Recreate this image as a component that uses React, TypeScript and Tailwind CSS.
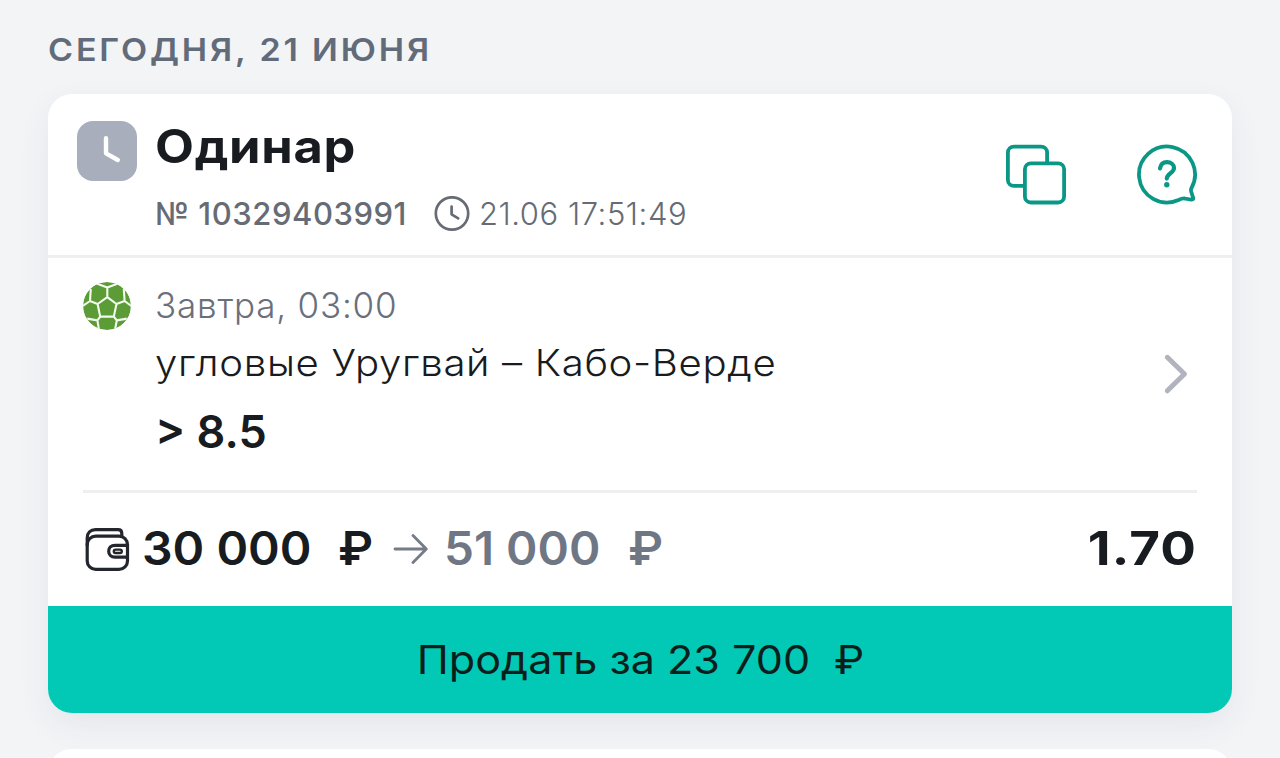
function StatusIcon() {
  return (
    <div className="h-[60px] w-[60px] shrink-0 rounded-[16px] bg-[#a9aebc]">
      <svg viewBox="0 0 60 60" className="h-full w-full" fill="none" stroke="#fff" strokeWidth="4.4" strokeLinecap="round" strokeLinejoin="round">
        <path d="M29 17.2V32.3L40.8 39" />
      </svg>
    </div>
  );
}

function ClockIcon() {
  return (
    <svg viewBox="0 0 36 36" className="h-9 w-9 shrink-0" fill="none" stroke="#666b74" strokeWidth="2.7" strokeLinecap="round" strokeLinejoin="round">
      <circle cx="18" cy="17.5" r="16.2" />
      <path d="M17.6 10.5V18.3L24.2 22.3" />
    </svg>
  );
}

function CopyIcon() {
  return (
    <svg viewBox="0 0 64 64" className="h-16 w-16" fill="none" stroke="#0b9786" strokeWidth="3.8">
      <rect x="3.9" y="4.7" width="39.2" height="39.2" rx="6" />
      <rect x="20.9" y="21.3" width="39.2" height="39.2" rx="6" fill="#fff" />
    </svg>
  );
}

function HelpIcon() {
  return (
    <svg viewBox="0 0 64 64" className="h-16 w-16" fill="none" stroke="#0b9786" strokeWidth="3.8" strokeLinecap="round" strokeLinejoin="round">
      <path d="M56.4 46.2A28 28 0 1 0 43.5 58C46 56.8 47.3 56.2 49.6 56.5L56 57.6C57.6 57.9 58.6 57.2 58.2 55.8L56.3 50C55.9 48.6 55.8 47.4 56.4 46.2Z" />
      <path d="M25 26.4C25.7 22.2 28.4 20.2 32 20.2C36 20.2 39 22.7 39 26C39 31.3 31.8 31.3 31.8 36.6" strokeWidth="4.2" />
      <circle cx="31.8" cy="42.8" r="2.7" fill="#0b9786" stroke="none" />
    </svg>
  );
}

function BallIcon() {
  return (
    <svg viewBox="0 0 48 48" className="mt-[0.5px] h-12 w-12 shrink-0">
      <defs>
        <clipPath id="ball">
          <circle cx="24" cy="24" r="24" />
        </clipPath>
      </defs>
      <g clipPath="url(#ball)">
        <circle cx="24" cy="24" r="24" fill="#5b9c37" />
        <path
          d="M24.3 15.2L33.5 22L30.8 34.6H17.2L14.6 22ZM24.3 15.2V5.6M24.3 5.6L13 1.2M24.3 5.6L35.6 1.2M33.5 22L41.6 19M14.6 22L7 19M41.6 19L40.8 7M41.6 19L49 24.5M7 19L7.8 7M7 19L-1 24.5M30.8 34.6L33.8 38.4M17.2 34.6L14.4 38.4M33.8 38.4L43.8 36.6M33.8 38.4L32 48M14.4 38.4L4.2 36.6M14.4 38.4L16 48"
          fill="none"
          stroke="#f4fbef"
          strokeWidth="2.1"
          strokeLinejoin="round"
        />
      </g>
    </svg>
  );
}

function WalletIcon() {
  return (
    <svg viewBox="0 0 48 48" className="mt-[4px] ml-px h-12 w-12 shrink-0" fill="none" stroke="#23262c" strokeWidth="3.2" strokeLinecap="round" strokeLinejoin="round">
      <rect x="3.2" y="10.2" width="40.3" height="33.2" rx="8.5" />
      <path d="M3.2 19V12C3.2 7 6.5 3.7 11.5 3.7H34C36.8 3.7 37.8 5.2 37.8 7.5V10.2" />
      <path d="M43.5 19.4H31C27 19.4 24.7 21.8 24.7 25.2C24.7 28.6 27 31.2 31 31.2H43.5" />
      <rect x="29.8" y="23.6" width="8" height="3.4" rx="1.7" strokeWidth="2.4" />
    </svg>
  );
}

export default function App() {
  return (
    <div className="h-[758px] overflow-hidden bg-[#f3f4f6] px-12 font-['Inter',sans-serif] text-[#181b20]">
      <h1 className="h-[94px] origin-left scale-x-[1.097] pt-7 text-[31px] leading-[44px] font-semibold tracking-[2.6px] whitespace-nowrap text-[#626b79]">
        СЕГОДНЯ, 21 ИЮНЯ
      </h1>

      <section className="overflow-hidden rounded-[24px] bg-white shadow-[0_12px_32px_rgba(50,55,100,0.07)]">
        <header className="flex h-[164px] border-b-[3px] border-[#eeeff1] pr-[33px] pl-[29px]">
          <div className="pt-[27px]">
            <StatusIcon />
          </div>
          <div className="ml-[18px] flex-1 pt-[24px]">
            <h2 className="origin-left scale-x-[1.1] text-[46px] leading-[56px] font-bold tracking-[0.6px]">Одинар</h2>
            <div className="mt-[22px] flex h-9 items-center text-[31px] leading-9 whitespace-nowrap text-[#666b74]">
              <span className="w-[279px] font-medium tracking-[0.55px]">№ 10329403991</span>
              <ClockIcon />
              <span className="ml-[9px] font-light tracking-[0.55px]">21.06 17:51:49</span>
            </div>
          </div>
          <div className="flex gap-[67px] pt-12">
            <CopyIcon />
            <HelpIcon />
          </div>
        </header>

        <div className="flex h-[232px] pt-[23px] pl-[35px]">
          <BallIcon />
          <div className="ml-6 flex-1 whitespace-nowrap">
            <p className="text-[35px] leading-[48px] font-light tracking-[0.78px] text-[#6a6f7b]">Завтра, 03:00</p>
            <p className="mt-[8px] origin-left scale-x-[1.085] text-[37px] leading-[52px] font-light tracking-[0.6px]">угловые Уругвай – Кабо-Верде</p>
            <p className="mt-[13px] text-[45px] leading-[60px] font-semibold">&gt; 8.5</p>
          </div>
          <svg viewBox="0 0 28 44" className="mt-[71px] mr-[42px] h-11 w-7" fill="none" stroke="#b1b4bf" strokeWidth="5" strokeLinecap="round" strokeLinejoin="round">
            <path d="M5.3 5.3L22.5 22L5.3 38.8" />
          </svg>
        </div>

        <div className="mx-[35px] flex h-[116px] items-center border-t-[3px] border-[#eeeff1] pb-[3px] text-[46px] leading-[60px] font-semibold whitespace-nowrap">
          <WalletIcon />
          <span className="ml-[10px] w-[196px] origin-left scale-x-[1.045]">30 000</span>
          <span className="w-[54px] origin-left scale-x-[1.05]">₽</span>
          <svg viewBox="0 0 36 32" className="mt-px h-8 w-9 shrink-0" fill="none" stroke="#757b87" strokeWidth="2.8" strokeLinecap="round" strokeLinejoin="round">
            <path d="M3 16H34M21 2.5L34.3 16L21 29.5" />
          </svg>
          <span className="ml-[16px] w-[184px] origin-left scale-x-[1.035] text-[#6f7785]">51 000</span>
          <span className="origin-left scale-x-[1.05] text-[#6f7785]">₽</span>
          <span className="ml-auto origin-right scale-x-[1.15] font-bold tracking-[1px]">1.70</span>
        </div>

        <button className="flex h-[107px] w-full items-center justify-center bg-[#02c9b5] text-[40px] leading-[56px] font-normal whitespace-nowrap text-[#0a1f1c]">
          <span className="flex scale-x-[1.078]">
            <span>Продать за 23 700</span>
            <span className="ml-[22px]">₽</span>
          </span>
        </button>
      </section>

      <section className="mt-9 h-24 rounded-[24px] bg-white" />
    </div>
  );
}
